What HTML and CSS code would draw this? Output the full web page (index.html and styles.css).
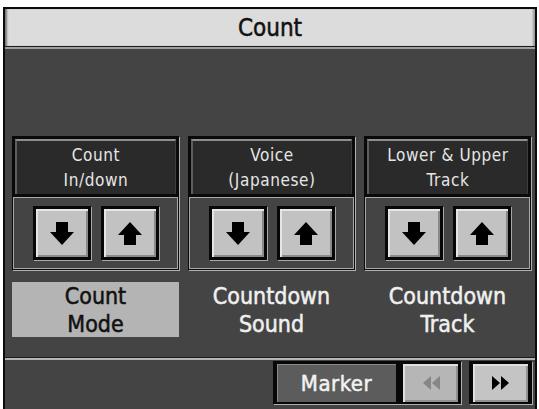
FILE: index.html
```html
<!DOCTYPE html>
<html>
<head>
<meta charset="utf-8">
<link rel="stylesheet" href="styles.css">
</head>
<body>
<div class="screen">
  <div class="title">Count</div>
  <div class="main">
    <div class="panels">
      <div class="panel">
        <div class="panel-head"><span>Count</span><span>In/down</span></div>
        <div class="panel-ctrl">
          <div class="arrow-btn"><svg width="24" height="23" viewBox="0 0 24 23"><polygon points="6,0 18,0 18,10 24,10 12,23 0,10 6,10" fill="#000"/></svg></div>
          <div class="arrow-btn"><svg width="24" height="23" viewBox="0 0 24 23"><polygon points="6,23 18,23 18,13 24,13 12,0 0,13 6,13" fill="#000"/></svg></div>
        </div>
      </div>
      <div class="panel">
        <div class="panel-head"><span>Voice</span><span>(Japanese)</span></div>
        <div class="panel-ctrl">
          <div class="arrow-btn"><svg width="24" height="23" viewBox="0 0 24 23"><polygon points="6,0 18,0 18,10 24,10 12,23 0,10 6,10" fill="#000"/></svg></div>
          <div class="arrow-btn"><svg width="24" height="23" viewBox="0 0 24 23"><polygon points="6,23 18,23 18,13 24,13 12,0 0,13 6,13" fill="#000"/></svg></div>
        </div>
      </div>
      <div class="panel">
        <div class="panel-head"><span>Lower &amp; Upper</span><span>Track</span></div>
        <div class="panel-ctrl">
          <div class="arrow-btn"><svg width="24" height="23" viewBox="0 0 24 23"><polygon points="6,0 18,0 18,10 24,10 12,23 0,10 6,10" fill="#000"/></svg></div>
          <div class="arrow-btn"><svg width="24" height="23" viewBox="0 0 24 23"><polygon points="6,23 18,23 18,13 24,13 12,0 0,13 6,13" fill="#000"/></svg></div>
        </div>
      </div>
    </div>
    <div class="labels">
      <div class="label active"><span>Count</span><span>Mode</span></div>
      <div class="label"><span>Countdown</span><span>Sound</span></div>
      <div class="label"><span>Countdown</span><span>Track</span></div>
    </div>
  </div>
  <div class="bottombar">
    <div class="btn-group">
      <div class="marker">Marker</div>
      <div class="nav-btn dim"><svg width="18" height="14" viewBox="0 0 18 14"><polygon points="9,0 9,14 1,7" fill="#868686"/><polygon points="18,0 18,14 10,7" fill="#868686"/></svg></div>
    </div>
    <div class="btn-group single">
      <div class="nav-btn"><svg width="18" height="14" viewBox="0 0 18 14"><polygon points="0,0 0,14 8,7" fill="#000"/><polygon points="9,0 9,14 17,7" fill="#000"/></svg></div>
    </div>
  </div>
</div>
</body>
</html>
```

FILE: styles.css
```css
body {
  margin: 0;
  background: #fff;
  font-family: "DejaVu Sans Condensed", "DejaVu Sans", sans-serif;
}

.screen {
  margin: 7px 0 0 3px;
  width: 534px;
  height: 402px;
  box-sizing: border-box;
  border: 2px solid #0b0b0b;
  border-bottom: 0;
  background: #444;
  display: flex;
  flex-direction: column;
}

.title {
  flex: none;
  height: 37px;
  background: #dcdcdc;
  box-shadow: inset 3px 0 2px -1px #7a7a7a, inset -3px 0 2px -1px #9a9a9a;
  border-bottom: 1px solid #1c1c1c;
  display: flex;
  align-items: center;
  justify-content: center;
  font-size: 24px;
  color: #111;
  -webkit-text-stroke: 0.5px #111;
}

.main {
  flex: 1;
  border-top: 2px solid #a0a0a0;
  border-bottom: 1px solid #1c1c1c;
  padding: 87px 0 0 7px;
  display: flex;
  flex-direction: column;
}

.panels,
.labels {
  display: grid;
  grid-template-columns: repeat(3, 167px);
  column-gap: 9px;
}

.panel {
  background: #0a0a0a;
  padding: 3px 3px 1px;
  box-shadow: 1px 1px 0 #b0b0b0;
}

.panel-head {
  height: 55px;
  box-sizing: border-box;
  background: #2a2a2a;
  border-top: 2px solid #8e8e8e;
  border-left: 2px solid #5e5e5e;
  border-right: 1px solid #3c3c3c;
  color: #e6e6e6;
  font-size: 17px;
  letter-spacing: 0.6px;
  line-height: 25px;
  display: flex;
  flex-direction: column;
  align-items: center;
  justify-content: center;
}

.panel-ctrl {
  margin: 3px -2px 0;
  height: 72px;
  box-sizing: border-box;
  border: 1px solid #a8a8a8;
  background: #444;
  display: flex;
  justify-content: center;
  gap: 10px;
  padding-top: 8px;
}

.arrow-btn {
  width: 58px;
  height: 54px;
  box-sizing: border-box;
  border: 3px solid #080808;
  background: #c2c2c2;
  box-shadow: 1px 1px 0 #a8a8a8, inset 2px 2px 0 #e6e6e6, inset -2px -2px 0 #8a8a8a;
  display: flex;
  align-items: center;
  justify-content: center;
}

.labels {
  margin-top: 12px;
}

.label {
  height: 55px;
  display: flex;
  flex-direction: column;
  align-items: center;
  justify-content: center;
  font-size: 23px;
  line-height: 28px;
  color: #f0f0f0;
  -webkit-text-stroke: 0.5px #f0f0f0;
}

.label.active {
  background: #b4b4b4;
  color: #111;
  -webkit-text-stroke: 0.5px #111;
}

.bottombar {
  flex: none;
  height: 48px;
  border-top: 2px solid #b4b4b4;
  display: flex;
  justify-content: flex-end;
  align-items: flex-start;
  gap: 8px;
  padding: 1px 3px 0 0;
}

.btn-group {
  background: #080808;
  padding: 3px 3px 2px 4px;
  display: flex;
  gap: 7px;
  box-shadow: 1px 1px 0 #b0b0b0;
}

.btn-group.single {
  padding: 3px 4px 2px 4px;
}

.marker {
  width: 119px;
  height: 38px;
  background: #5c5c5c;
  box-shadow: inset 1px 1px 0 #8a8a8a;
  color: #f2f2f2;
  font-size: 22px;
  letter-spacing: 0.5px;
  -webkit-text-stroke: 0.5px #f2f2f2;
  display: flex;
  align-items: center;
  justify-content: center;
}

.nav-btn {
  width: 55px;
  height: 38px;
  background: #c4c4c4;
  box-shadow: inset 2px 2px 0 #e0e0e0, inset -2px -2px 0 #909090;
  display: flex;
  align-items: center;
  justify-content: center;
}

.nav-btn.dim {
  background: #b6b6b6;
}
```
